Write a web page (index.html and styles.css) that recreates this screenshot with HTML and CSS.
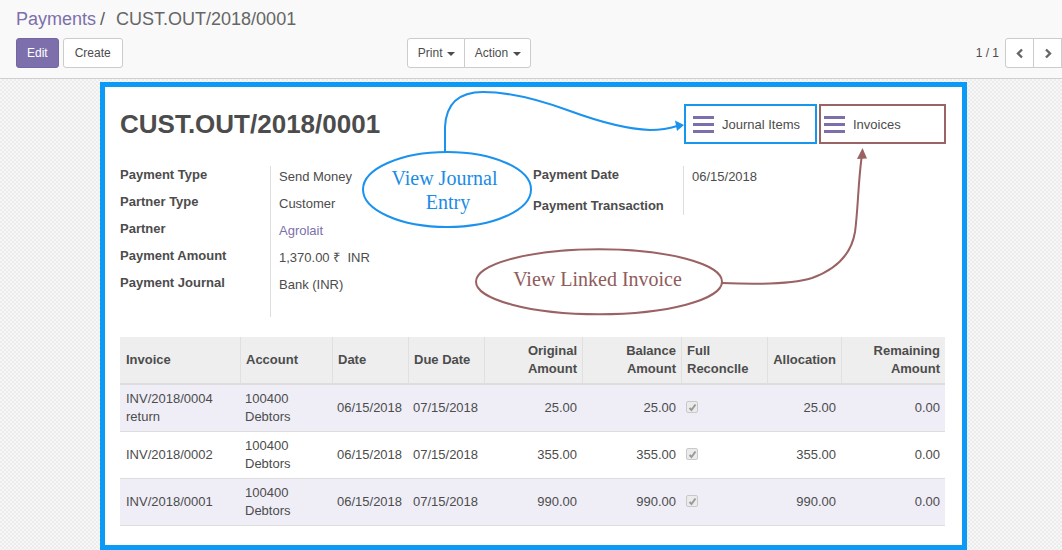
FILE: index.html
```html
<!DOCTYPE html>
<html lang="en">
<head>
<meta charset="utf-8">
<title>CUST.OUT/2018/0001</title>
<link rel="stylesheet" href="styles.css">
</head>
<body>
<div class="app">
  <div class="control-panel">
    <ol class="breadcrumb">
      <li><a href="#">Payments</a></li>
      <li class="active">CUST.OUT/2018/0001</li>
    </ol>
    <div class="cp-row">
      <div class="cp-left">
        <button class="btn btn-primary btn-edit">Edit</button>
        <button class="btn">Create</button>
        <div class="btn-group sidebar">
          <button class="btn btn-drop">Print <span class="caret"></span></button>
          <button class="btn btn-drop">Action <span class="caret"></span></button>
        </div>
      </div>
      <div class="cp-right">
        <span class="pager-value">1 / 1</span>
        <div class="btn-group pager">
          <button class="btn btn-icon"><svg width="8" height="11" viewBox="0 0 8 11"><path d="M6 1.5 L2 5.5 L6 9.5" fill="none" stroke="#666" stroke-width="2.4"/></svg></button>
          <button class="btn btn-icon"><svg width="8" height="11" viewBox="0 0 8 11"><path d="M2 1.5 L6 5.5 L2 9.5" fill="none" stroke="#666" stroke-width="2.4"/></svg></button>
        </div>
      </div>
    </div>
  </div>

  <div class="content">
    <div class="sheet">
      <div class="sheet-header">
        <h1 class="title">CUST.OUT/2018/0001</h1>
        <div class="smart-buttons">
          <button class="stat-btn journal">
            <svg class="list-icon" width="21" height="17" viewBox="0 0 21 17"><rect x="0" y="0" width="21" height="3"/><rect x="0" y="7" width="21" height="3"/><rect x="0" y="14" width="21" height="3"/></svg>
            <span>Journal Items</span>
          </button>
          <button class="stat-btn invoices">
            <svg class="list-icon" width="21" height="17" viewBox="0 0 21 17"><rect x="0" y="0" width="21" height="3"/><rect x="0" y="7" width="21" height="3"/><rect x="0" y="14" width="21" height="3"/></svg>
            <span>Invoices</span>
          </button>
        </div>
      </div>

      <div class="groups">
        <div class="group group-left">
          <div class="label">Payment Type</div><div class="value">Send Money</div>
          <div class="label">Partner Type</div><div class="value">Customer</div>
          <div class="label">Partner</div><div class="value"><a href="#" class="link">Agrolait</a></div>
          <div class="label">Payment Amount</div><div class="value">1,370.00 ₹&nbsp; INR</div>
          <div class="label">Payment Journal</div><div class="value">Bank (INR)</div>
        </div>
        <div class="group group-right">
          <div class="label">Payment Date</div><div class="value">06/15/2018</div>
          <div class="label">Payment Transaction</div><div class="value"></div>
        </div>
      </div>

      <table class="lines">
        <colgroup>
          <col class="c-inv"><col class="c-acc"><col class="c-date"><col class="c-due"><col class="c-orig"><col class="c-bal"><col class="c-full"><col class="c-alloc"><col class="c-rem">
        </colgroup>
        <thead>
          <tr>
            <th>Invoice</th>
            <th>Account</th>
            <th>Date</th>
            <th>Due Date</th>
            <th class="num">Original<br>Amount</th>
            <th class="num">Balance<br>Amount</th>
            <th>Full<br>Reconclle</th>
            <th class="num">Allocation</th>
            <th class="num">Remaining<br>Amount</th>
          </tr>
        </thead>
        <tbody>
          <tr>
            <td class="first">INV/2018/0004<br>return</td>
            <td>100400<br>Debtors</td>
            <td>06/15/2018</td>
            <td>07/15/2018</td>
            <td class="num">25.00</td>
            <td class="num">25.00</td>
            <td><span class="cb"><svg width="9" height="9" viewBox="0 0 9 9"><path d="M1.5 5 L3.5 7 L7.5 1.5" fill="none" stroke="#9a9a9a" stroke-width="2"/></svg></span></td>
            <td class="num">25.00</td>
            <td class="num">0.00</td>
          </tr>
          <tr>
            <td class="first">INV/2018/0002</td>
            <td>100400<br>Debtors</td>
            <td>06/15/2018</td>
            <td>07/15/2018</td>
            <td class="num">355.00</td>
            <td class="num">355.00</td>
            <td><span class="cb"><svg width="9" height="9" viewBox="0 0 9 9"><path d="M1.5 5 L3.5 7 L7.5 1.5" fill="none" stroke="#9a9a9a" stroke-width="2"/></svg></span></td>
            <td class="num">355.00</td>
            <td class="num">0.00</td>
          </tr>
          <tr>
            <td class="first">INV/2018/0001</td>
            <td>100400<br>Debtors</td>
            <td>06/15/2018</td>
            <td>07/15/2018</td>
            <td class="num">990.00</td>
            <td class="num">990.00</td>
            <td><span class="cb"><svg width="9" height="9" viewBox="0 0 9 9"><path d="M1.5 5 L3.5 7 L7.5 1.5" fill="none" stroke="#9a9a9a" stroke-width="2"/></svg></span></td>
            <td class="num">990.00</td>
            <td class="num">0.00</td>
          </tr>
        </tbody>
      </table>
    </div>
  </div>

  <svg class="annotations" width="1062" height="550" viewBox="0 0 1062 550">
    <g class="ann-blue">
      <path class="ann-line" d="M445 153 L445 127 C446 105 458 92 483 92 C510 92 540 100 570 111 C600 122 625 129 650 130 C663 130 671 128 677 126"/>
      <polygon class="ann-fill" points="684,125 675,120.5 677,131"/>
      <ellipse class="ann-line" cx="447" cy="189.5" rx="84" ry="37.5"/>
      <text class="ann-text" x="444.5" y="185">View Journal</text>
      <text class="ann-text" x="448" y="209">Entry</text>
    </g>
    <g class="ann-brown">
      <path class="ann-line" d="M722 283 C745 284 790 285 812 278 C840 268 852 250 855 232 C858 210 858 185 861.5 158"/>
      <polygon class="ann-fill" points="862.5,148 857,159 867,158.5"/>
      <ellipse class="ann-line" cx="599" cy="281.7" rx="123" ry="32.5"/>
      <text class="ann-text" x="597.5" y="286">View Linked Invoice</text>
    </g>
  </svg>
</div>
</body>
</html>
```

FILE: styles.css
```css
* { box-sizing: border-box; }

body {
  margin: 0;
  font-family: "Liberation Sans", Arial, sans-serif;
  font-size: 13px;
  color: #4c4c4c;
  background: #fff;
}

.app {
  position: relative;
  width: 1062px;
  height: 550px;
  overflow: hidden;
}

/* ---------- control panel ---------- */
.control-panel {
  height: 79px;
  background: #f9f9f9;
  border-bottom: 1px solid #cfcfcf;
  padding: 6px 0 0 16px;
}

.breadcrumb {
  display: flex;
  margin: 0;
  padding: 0;
  list-style: none;
  font-size: 18px;
  line-height: 26px;
  height: 26px;
}
.breadcrumb a {
  color: #7c6fab;
  text-decoration: none;
}
.breadcrumb li + li::before {
  content: "/\00a0";
  padding: 0 6px 0 4px;
  color: #5a5a5a;
}
.breadcrumb .active { color: #666; }

.cp-row {
  display: grid;
  grid-template-columns: 515px 1fr;
  margin-top: 6px;
  height: 30px;
}
.cp-left {
  display: flex;
  gap: 4px;
}
.cp-right {
  display: flex;
  justify-content: flex-end;
  align-items: center;
}

.btn {
  height: 30px;
  padding: 0 11px;
  font-family: "Liberation Sans", Arial, sans-serif;
  font-size: 12px;
  color: #4c4c4c;
  background: #fff;
  border: 1px solid #ccc;
  border-radius: 3px;
  cursor: pointer;
}
.btn-edit { padding: 0 10px; }
.btn-drop { padding: 0 9.5px; }
.btn-primary {
  background: #7c6fab;
  border-color: #7466a3;
  color: #fff;
}

.btn-group { display: flex; }
.btn-group .btn { border-radius: 0; }
.btn-group .btn + .btn { margin-left: -1px; }
.btn-group .btn:first-child { border-radius: 3px 0 0 3px; }
.btn-group .btn:last-child { border-radius: 0 3px 3px 0; }

.sidebar { margin-left: auto; }

.caret {
  display: inline-block;
  width: 0;
  height: 0;
  margin-left: 1px;
  vertical-align: middle;
  border-top: 4px solid #4c4c4c;
  border-left: 4px solid transparent;
  border-right: 4px solid transparent;
}

.pager-value {
  font-size: 12px;
  margin-right: 6px;
  color: #4c4c4c;
}
.btn-icon {
  width: 29px;
  padding: 0;
  display: flex;
  align-items: center;
  justify-content: center;
}
.pager .btn:last-child { border-radius: 0; }

/* ---------- content ---------- */
.content {
  height: 471px;
  padding: 3px 0 0 100px;
  background-color: #f2f2f2;
  background-image: repeating-conic-gradient(#ececec 0 25%, #f7f7f7 0 50%);
  background-size: 4px 4px;
}

.sheet {
  width: 867px;
  height: 468px;
  background: #fff;
  border: 5px solid #0b9af6;
  padding: 17px 16px 0 15px;
}

.sheet-header {
  display: flex;
  justify-content: space-between;
  align-items: center;
  height: 40px;
}
.title {
  margin: 0;
  font-size: 26px;
  line-height: 40px;
  font-weight: bold;
  color: #4c4c4c;
}

.smart-buttons {
  display: flex;
  gap: 2px;
}
.stat-btn {
  display: flex;
  align-items: center;
  gap: 8px;
  height: 40px;
  background: #fff;
  border: 2px solid;
  font-family: "Liberation Sans", Arial, sans-serif;
  font-size: 13px;
  color: #4c4c4c;
  cursor: pointer;
}
.stat-btn.journal {
  width: 133px;
  padding-left: 7px;
  border-color: #1796ee;
}
.stat-btn.invoices {
  width: 127px;
  padding-left: 3px;
  border-color: #9a6464;
}
.list-icon rect { fill: #7c6fab; }

/* ---------- groups ---------- */
.groups {
  display: flex;
  margin-top: 22px;
}
.group {
  display: grid;
  grid-template-columns: 150px 1fr;
}
.group-left {
  width: 413px;
  grid-template-rows: 27px 27px 27px 27px 43px;
}
.group-right {
  flex: 1;
  grid-template-rows: 31px 18px;
  align-self: start;
}
.label {
  font-weight: bold;
  line-height: 18px;
  color: #4c4c4c;
}
.value {
  border-left: 1px solid #ddd;
  padding: 2px 0 0 8px;
  line-height: 18px;
  color: #4c4c4c;
}
.link {
  color: #7c6fab;
  text-decoration: none;
}

/* ---------- table ---------- */
.lines {
  margin-top: 20px;
  width: 825px;
  table-layout: fixed;
  border-collapse: separate;
  border-spacing: 0;
}
.c-inv { width: 120px; }
.c-acc { width: 92px; }
.c-date { width: 76px; }
.c-due { width: 76px; }
.c-orig { width: 98px; }
.c-bal { width: 99px; }
.c-full { width: 86px; }
.c-alloc { width: 74px; }
.c-rem { width: 104px; }

.lines th {
  background: #eee;
  padding: 5px;
  line-height: 18px;
  text-align: left;
  font-weight: bold;
  vertical-align: middle;
  border-bottom: 2px solid #ddd;
  border-left: 1px solid #e0e0e0;
  color: #4c4c4c;
}
.lines th:first-child {
  border-left: none;
  padding-left: 6px;
}
.lines td {
  padding: 5px;
  line-height: 18px;
  vertical-align: middle;
  border-bottom: 1px solid #ddd;
  color: #4c4c4c;
}
.lines td.first { padding-left: 6px; }
.lines .num { text-align: right; }
.lines tbody tr:nth-child(odd) td { background: #efeef7; }

.cb {
  display: inline-flex;
  align-items: center;
  justify-content: center;
  width: 12px;
  height: 12px;
  border: 1px solid #c9c9c9;
  border-radius: 2px;
  background: #ebebeb;
  vertical-align: middle;
  margin-top: -3px;
}

/* ---------- annotations ---------- */
.annotations {
  position: absolute;
  left: 0;
  top: 0;
  pointer-events: none;
}
.ann-line { fill: none; stroke-width: 2; }
.ann-blue .ann-line { stroke: #1a92ee; }
.ann-blue .ann-fill { fill: #1a92ee; }
.ann-blue .ann-text { fill: #1a8be6; }
.ann-brown .ann-line { stroke: #9a6262; }
.ann-brown .ann-fill { fill: #9a6262; }
.ann-brown .ann-text { fill: #8f5b5b; }
.ann-text {
  font-family: "Liberation Serif", "Times New Roman", serif;
  font-size: 20px;
  text-anchor: middle;
}
```
